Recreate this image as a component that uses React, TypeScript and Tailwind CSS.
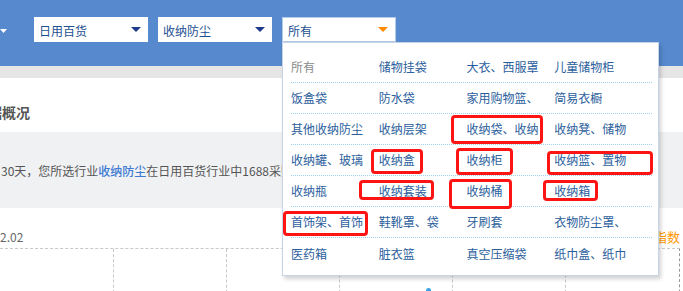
import type { ReactNode } from 'react'

const rows = [
  ['所有', '储物挂袋', '大衣、西服罩', '儿童储物柜'],
  ['饭盒袋', '防水袋', '家用购物篮、', '简易衣橱'],
  ['其他收纳防尘', '收纳层架', '收纳袋、收纳', '收纳凳、储物'],
  ['收纳罐、玻璃', '收纳盒', '收纳柜', '收纳篮、置物'],
  ['收纳瓶', '收纳套装', '收纳桶', '收纳箱'],
  ['首饰架、首饰', '鞋靴罩、袋', '牙刷套', '衣物防尘罩、'],
  ['医药箱', '脏衣篮', '真空压缩袋', '纸巾盒、纸巾'],
]

// hand-drawn red marks on top of the menu (relative to the menu box)
const marks = [
  'left-[168px] top-[72px] w-[92px] h-[29px]',
  'left-[88px] top-[106px] w-[52px] h-[25px]',
  'left-[173px] top-[105px] w-[57px] h-[27px]',
  'left-[264px] top-[108px] w-[106px] h-[24px]',
  'left-[76px] top-[137px] w-[75px] h-[20px]',
  'left-[166px] top-[136px] w-[63px] h-[30px]',
  'left-[260px] top-[137px] w-[55px] h-[21px]',
  'left-[0px] top-[168px] w-[85px] h-[25px]',
]

function Caret({ color }: { color: string }) {
  return (
    <svg width="10" height="5" viewBox="0 0 10 5" className="shrink-0">
      <path d="M0 0h10L5 5z" fill={color} />
    </svg>
  )
}

function Select({
  label,
  active,
  children,
}: {
  label: string
  active?: boolean
  children?: ReactNode
}) {
  return (
    <div
      className={`relative flex h-[25px] w-[114px] items-center justify-between bg-white pl-[5px] pr-[7px] ${
        active ? 'border border-[#b3cbe9]' : ''
      }`}
    >
      <span className="pt-[3px] text-[12px] leading-none text-[#1c4f8f]">
        {label}
      </span>
      <Caret color={active ? '#ff8a00' : '#1b3a8c'} />
      {children}
    </div>
  )
}

function Menu() {
  return (
    <div className="absolute left-[-1px] top-[24px] z-10 w-[377px] border border-[#c6d4e6] bg-white pb-[6px] pl-[8px] pr-[6px] pt-[9px] shadow-[2px_3px_4px_rgba(0,0,0,0.18)]">
      {rows.map((row, i) => (
        <div
          key={i}
          className={`flex h-[31px] items-center ${
            i < rows.length - 1 ? 'border-b border-dotted border-[#9fd3f2]' : ''
          }`}
        >
          {row.map((item, j) => (
            <span
              key={item}
              className={`overflow-hidden whitespace-nowrap text-[12px] ${
                j === 3 ? 'w-[98px]' : 'w-[88px]'
              } ${i === 0 && j === 0 ? 'text-[#8a8a8a]' : 'text-[#2b5e9c]'}`}
            >
              {item}
            </span>
          ))}
        </div>
      ))}
      {marks.map((m) => (
        <div
          key={m}
          className={`absolute rounded-[4px] border-[3px] border-[#ff1414] ${m}`}
        />
      ))}
    </div>
  )
}

export default function App() {
  return (
    <div className="relative h-[291px] w-[683px] overflow-hidden bg-white font-['Noto_Sans_CJK_SC','Noto_Sans',sans-serif]">
      {/* Header */}
      <div className="flex h-[66px] items-start bg-[#5689cd] pt-[17px]">
        <div className="mt-[12px] w-[34px]">
          <svg width="7" height="4" viewBox="0 0 7 4">
            <path d="M0 0h7L3.5 4z" fill="#ffffff" />
          </svg>
        </div>
        <div className="flex gap-[10px]">
          <Select label="日用百货" />
          <Select label="收纳防尘" />
          <Select label="所有" active>
            <Menu />
          </Select>
        </div>
      </div>
      <div className="h-[12px] bg-[#e6e6e6]" />

      {/* Title */}
      <div className="h-[54px] pt-[24px]">
        <h2 className="ml-[-26px] text-[14px] font-bold leading-[20px] text-[#555]">
          数据概况
        </h2>
      </div>

      {/* Summary */}
      <div className="flex h-[76px] items-center bg-[#f0f1f3] pt-[2px]">
        <p className="whitespace-nowrap pl-[1px] text-[12px] text-[#555]">
          30天，您所选行业
          <span className="font-medium text-[#3f7bd4]">收纳防尘</span>
          在日用百货行业中1688采购指数排名第一
        </p>
      </div>

      {/* Chart */}
      <div className="flex h-[40px] w-[680px] items-start justify-between pt-[21px]">
        <span className="text-[12px] leading-[16px] text-[#666]">2.02</span>
        <span className="text-[13px] leading-[16px] text-[#ff9900]">
          采购指数
        </span>
      </div>
      <div className="flex h-[60px] w-[680px] border-r border-t border-dashed border-r-[#999] border-t-[#c8c8c8]">
        {[0, 1, 2, 3, 4, 5].map((i) => (
          <div
            key={i}
            className={`relative w-[113px] ${
              i > 0 ? 'border-l border-dashed border-[#c8c8c8]' : ''
            }`}
          >
            {i === 3 && (
              <div className="absolute left-[86px] top-[39px] h-[5px] w-[5px] rounded-full bg-[#3aa0e8]" />
            )}
          </div>
        ))}
      </div>
    </div>
  )
}
